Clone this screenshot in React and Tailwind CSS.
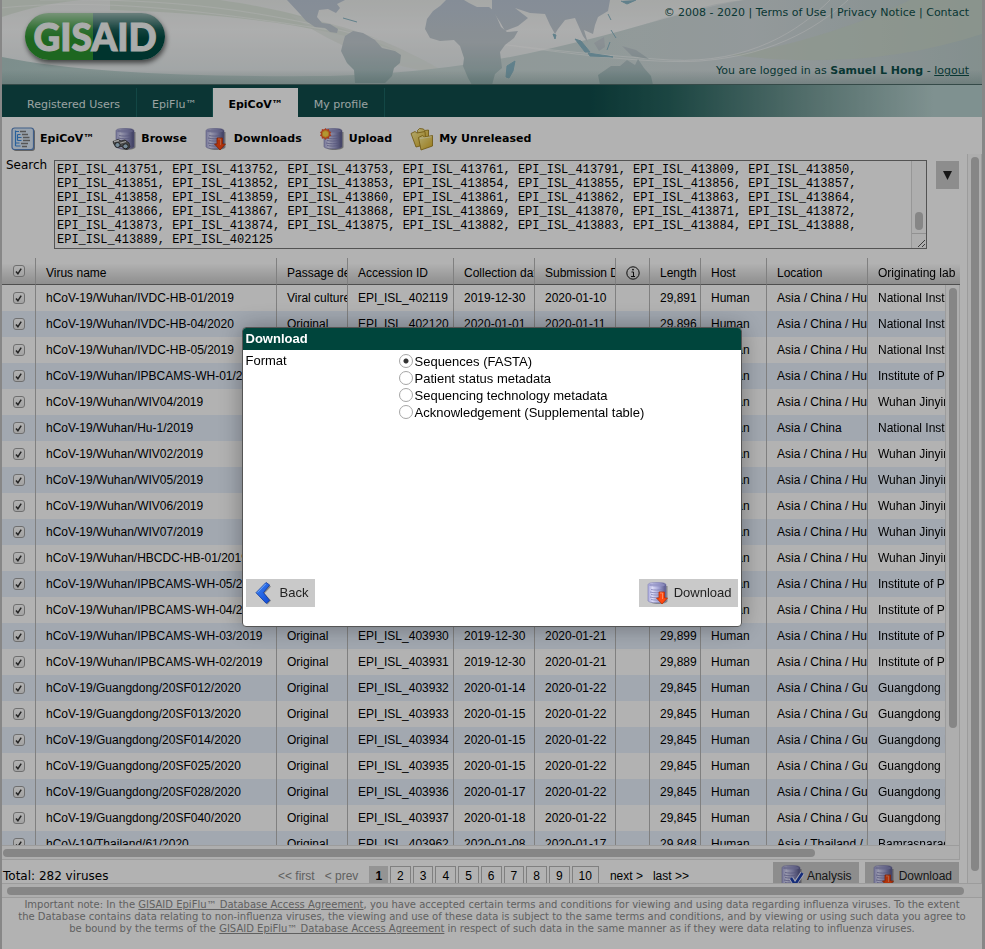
import React, { useEffect, useRef } from "react";

const SANS = "font-['Liberation_Sans',Arial,sans-serif]";

const ids = [
  "413732", "413733", "413734", "413735", "413740", "413742", "413743",
  "413751", "413752", "413753", "413761", "413791", "413809", "413850",
  "413851", "413852", "413853", "413854", "413855", "413856", "413857",
  "413858", "413859", "413860", "413861", "413862", "413863", "413864",
  "413866", "413867", "413868", "413869", "413870", "413871", "413872",
  "413873", "413874", "413875", "413882", "413883", "413884", "413888",
  "413889", "402125",
];
const query = ids.map((id) => "EPI_ISL_" + id).join(", ");

const rows = [
  ["Wuhan/IVDC-HB-01/2019", "Viral culture", "402119", "2019-12-30", "2020-01-10", "29,891", "Asia / China / Hubei", "National Institute for Viral"],
  ["Wuhan/IVDC-HB-04/2020", "Original", "402120", "2020-01-01", "2020-01-11", "29,896", "Asia / China / Hubei", "National Institute for Viral"],
  ["Wuhan/IVDC-HB-05/2019", "Original", "402121", "2019-12-30", "2020-01-11", "29,891", "Asia / China / Hubei", "National Institute for Viral"],
  ["Wuhan/IPBCAMS-WH-01/2019", "Original", "402123", "2019-12-24", "2020-01-11", "29,899", "Asia / China / Hubei", "Institute of Pathogen Biology"],
  ["Wuhan/WIV04/2019", "Original", "402124", "2019-12-30", "2020-01-11", "29,891", "Asia / China / Hubei", "Wuhan Jinyintan Hospital"],
  ["Wuhan/Hu-1/2019", "Original", "402125", "2019-12-31", "2020-01-12", "29,903", "Asia / China", "National Institute for Viral"],
  ["Wuhan/WIV02/2019", "Original", "402127", "2019-12-30", "2020-01-18", "29,825", "Asia / China / Hubei", "Wuhan Jinyintan Hospital"],
  ["Wuhan/WIV05/2019", "Original", "402128", "2019-12-30", "2020-01-18", "29,852", "Asia / China / Hubei", "Wuhan Jinyintan Hospital"],
  ["Wuhan/WIV06/2019", "Original", "402129", "2019-12-30", "2020-01-18", "29,854", "Asia / China / Hubei", "Wuhan Jinyintan Hospital"],
  ["Wuhan/WIV07/2019", "Original", "402130", "2019-12-30", "2020-01-18", "29,857", "Asia / China / Hubei", "Wuhan Jinyintan Hospital"],
  ["Wuhan/HBCDC-HB-01/2019", "Original", "402132", "2019-12-30", "2020-01-19", "29,848", "Asia / China / Hubei", "Wuhan Jinyintan Hospital"],
  ["Wuhan/IPBCAMS-WH-05/2020", "Original", "403928", "2020-01-01", "2020-01-21", "29,883", "Asia / China / Hubei", "Institute of Pathogen Biology"],
  ["Wuhan/IPBCAMS-WH-04/2019", "Original", "403929", "2019-12-30", "2020-01-21", "29,890", "Asia / China / Hubei", "Institute of Pathogen Biology"],
  ["Wuhan/IPBCAMS-WH-03/2019", "Original", "403930", "2019-12-30", "2020-01-21", "29,899", "Asia / China / Hubei", "Institute of Pathogen Biology"],
  ["Wuhan/IPBCAMS-WH-02/2019", "Original", "403931", "2019-12-30", "2020-01-21", "29,889", "Asia / China / Hubei", "Institute of Pathogen Biology"],
  ["Guangdong/20SF012/2020", "Original", "403932", "2020-01-14", "2020-01-22", "29,845", "Asia / China / Guangdong", "Guangdong Provincial Center"],
  ["Guangdong/20SF013/2020", "Original", "403933", "2020-01-15", "2020-01-22", "29,845", "Asia / China / Guangdong", "Guangdong Provincial Center"],
  ["Guangdong/20SF014/2020", "Original", "403934", "2020-01-15", "2020-01-22", "29,845", "Asia / China / Guangdong", "Guangdong Provincial Center"],
  ["Guangdong/20SF025/2020", "Original", "403935", "2020-01-15", "2020-01-22", "29,845", "Asia / China / Guangdong", "Guangdong Provincial Center"],
  ["Guangdong/20SF028/2020", "Original", "403936", "2020-01-17", "2020-01-22", "29,845", "Asia / China / Guangdong", "Guangdong Provincial Center"],
  ["Guangdong/20SF040/2020", "Original", "403937", "2020-01-18", "2020-01-22", "29,845", "Asia / China / Guangdong", "Guangdong Provincial Center"],
  ["Thailand/61/2020", "Original", "403962", "2020-01-08", "2020-01-17", "29,848", "Asia / Thailand / Nonthaburi", "Bamrasnaradura Hospital"],
];

function Defs() {
  return (
    <svg className="absolute h-0 w-0" aria-hidden="true">
      <defs>
        <linearGradient id="cyl" x1="0" x2="1">
          <stop offset="0" stopColor="#a9a9dc" />
          <stop offset=".25" stopColor="#dcdcf8" />
          <stop offset=".6" stopColor="#a2a2d2" />
          <stop offset="1" stopColor="#565688" />
        </linearGradient>
        <linearGradient id="fold" x1="0" y1="0" x2="1" y2="1">
          <stop offset="0" stopColor="#fff3a0" />
          <stop offset="1" stopColor="#dcae22" />
        </linearGradient>
        <linearGradient id="blue" x1="0" y1="0" x2="1" y2="1">
          <stop offset="0" stopColor="#3c83f2" />
          <stop offset="1" stopColor="#0f49d6" />
        </linearGradient>
      </defs>
    </svg>
  );
}

function Cylinder({ x = 3 }) {
  return (
    <g transform={`translate(${x} 0)`}>
      <path d="M2 5v15c0 1.800 3.500 3 8 3s9.500-1.200 9.500-3V5z" fill="#444" opacity=".5" />
      <path d="M0 4c0-1.800 3-2.500 9-2.500S18 2.200 18 4v15.500c0 1.500-4 2.300-9 2.300S0 21 0 19.500z" fill="url(#cyl)" stroke="#7c7cb0" strokeWidth=".6" />
      <path d="M1 4c0-1.200 3-1.800 8-1.800S17 2.800 17 4s-3 1.500-8 1.500S1 5.200 1 4z" fill="#8f8fc2" opacity=".75" />
      <path d="M3 8.500c3 .7 8 .8 11 0M2 11c4 1 9 1 13 0M3 13.500c3 .7 8 .8 11 0M2 16c4 1 9 1 13 0M3 18.500c3 .7 8 .8 11 0" fill="none" stroke="#7f7fb4" strokeWidth=".8" />
    </g>
  );
}

function Icon({ kind }) {
  return (
    <svg className="size-6 shrink-0" viewBox="0 0 24 24" aria-hidden="true">
      {kind === "tree" && (
        <g>
          <rect x="2" y="2" width="22" height="22" rx="3" fill="#444" opacity=".6" />
          <rect x="1" y="1" width="21.500" height="21.500" rx="2.500" fill="#dceaf9" stroke="#5b87c4" strokeWidth="1.200" />
          <path d="M4.500 3.500v7M4.500 4.500h3.500M6.500 7.500h3M6.500 7.500v6M6.500 10.500h4M6.500 13.500h4M4.500 10v9M4.500 16h4M4.500 19h5" fill="none" stroke="#3c8be0" strokeWidth="1.200" />
          <path d="M9 4.500h6M11 7.500h6M12 10.500h6.500M12 13.500h7M10 16.500h7M11 19.500h5" stroke="#7c7c7c" strokeWidth="1.500" />
        </g>
      )}
      {kind === "browse" && (
        <g>
          <Cylinder x={4} />
          <path d="M1 14.500l5-2 3 1.500 4-1 4 3 1 4-3 2.500-3-1-2-2-3 .5-5-2.500z" fill="#6b6b6b" stroke="#333" strokeWidth=".8" />
          <path d="M2 14.500l5-1M7 16.500l7-2" stroke="#e4e4e4" strokeWidth="1.300" />
          <ellipse cx="5.500" cy="18" rx="2.700" ry="2.500" fill="#a9c6da" stroke="#2b2b2b" />
          <ellipse cx="13.500" cy="19.300" rx="2.700" ry="2.500" fill="#a9c6da" stroke="#2b2b2b" />
        </g>
      )}
      {kind === "down" && (
        <g>
          <Cylinder x={1} />
          <path d="M12 11h5.500v6h3L15 23l-5.500-6H12z" fill="#ff4a12" stroke="#b83208" strokeWidth=".8" />
          <path d="M13 12h2.500v6" fill="none" stroke="#ff8a5c" strokeWidth="1" />
        </g>
      )}
      {kind === "upload" && (
        <g>
          <Cylinder x={4} />
          <path d="M5.500 1l1.200 1.500L9 2l.3 2.200 2 .8-1 1.800 1 2-2 .8L9 11.800l-2.300-.5L5.500 13l-1.400-1.700-2.200.5-.3-2.200L0 8.800 1 6.800 0 5l1.600-.8L1.900 2l2.200.5z" fill="#f0562c" />
          <circle cx="5.500" cy="6.900" r="3.300" fill="#ffd94a" stroke="#f8a52a" />
        </g>
      )}
      {kind === "folders" && (
        <g stroke="#9c7a14" strokeWidth=".8">
          <path d="M7.500 3.500l2-2 4 .5 1 1.500 4-.5V15L9 18z" fill="url(#fold)" />
          <path d="M1 6.500l4-2 2 1.500 8-1.500 1 13-10 2.500z" fill="url(#fold)" />
          <path d="M8.500 10.500l4-2 2 1.500 8-1.500V19l-11.500 4z" fill="url(#fold)" />
          <path d="M10 11.500l11.500-1.800" stroke="#fffbd0" />
        </g>
      )}
      {kind === "check" && (
        <g>
          <Cylinder x={1} />
          <path d="M10 14l4 6 7.500-11" fill="none" stroke="#eef" strokeWidth="4.500" />
          <path d="M10 14l4 6.500 7.500-11.500" fill="none" stroke="#1d3fae" strokeWidth="2.600" />
        </g>
      )}
      {kind === "back" && (
        <g>
          <path d="M15 3l4 2.500-6.500 7 6.500 7-3.500 4L6 13z" fill="#444" opacity=".5" />
          <path d="M14 1.500l3.700 2.500-6.200 7.700 6.200 7.700-3.500 3L4 11.700z" fill="url(#blue)" stroke="#123a9c" strokeWidth=".8" />
          <path d="M13.800 2.800L5.300 11.500" stroke="#7db4ff" strokeWidth=".9" />
        </g>
      )}
    </svg>
  );
}

function HeaderArt() {
  return (
    <svg className="absolute inset-0 h-full w-full" viewBox="2 0 980 85" preserveAspectRatio="xMidYMid slice" aria-hidden="true">
      <defs>
        <linearGradient id="sky" x1="0" y1="0" x2="0" y2="1">
          <stop offset="0" stopColor="#eef1ef" />
          <stop offset=".35" stopColor="#f8f9f9" />
          <stop offset="1" stopColor="#e2e9ea" />
        </linearGradient>
        <linearGradient id="wave" x1="0" x2="1">
          <stop offset="0" stopColor="#b3ccc9" />
          <stop offset=".3" stopColor="#cadad8" />
          <stop offset=".65" stopColor="#d0dddc" />
          <stop offset="1" stopColor="#c3d3d1" />
        </linearGradient>
        <linearGradient id="land" gradientUnits="userSpaceOnUse" x1="0" y1="0" x2="0" y2="85">
          <stop offset="0" stopColor="#bfcbd9" />
          <stop offset=".5" stopColor="#c6ced4" />
          <stop offset="1" stopColor="#a0bcbb" />
        </linearGradient>
        <linearGradient id="base" x1="0" y1="0" x2="0" y2="1">
          <stop offset="0" stopColor="#6f8f8c" stopOpacity="0" />
          <stop offset="1" stopColor="#6f8f8c" stopOpacity=".6" />
        </linearGradient>
        <linearGradient id="shade" x1="0" x2="1">
          <stop offset="0" stopColor="#d5dcdf" stopOpacity="0" />
          <stop offset=".4" stopColor="#d5dcdf" stopOpacity=".8" />
          <stop offset="1" stopColor="#bccdcb" stopOpacity=".9" />
        </linearGradient>
      </defs>
      <rect x="2" width="980" height="85" fill="url(#sky)" />
      <path d="M2 0h80C50 3 30 8 2 17zM110 0h110c70 10 120 25 180 52C320 24 230 14 110 10z" fill="#e0e9df" />
      <path d="M290 15c60 10 110 30 160 60-60-8-110-25-160-60z" fill="#e4e9e4" opacity=".7" />
      <path d="M2 57C80 73 200 77 330 76 470 72 560 48 660 20 700 9 720 4 745 0H982V85H2z" fill="url(#wave)" />
      <path d="M600 40C680 10 720 2 745 0H982V85H600z" fill="url(#shade)" />
      <path d="M730 55C810 44 880 15 910 0h72v34c-80 26-160 32-252 21z" fill="#cbd9c8" opacity=".6" />
      <path d="M0 8C100-2 200 10 330 30M430 34c60 10 150 20 240 26 80 4 130-30 160-60M500 44c70 10 150 20 200 17 80-6 125-40 148-61M40 0C180-2 260 10 380 40" fill="none" stroke="#fff" strokeWidth=".8" opacity=".6" />
      <g fill="url(#land)">
        <path d="M287 0l13 14 6 7 9 6 10 1 5 4 7 1 1-4-8-5-8-1-5-6 2-7 9-1 8 4 4-5-3-4 8-4zM345 36l8-5 10 2 12 7 7 8 13 3 6 4-1 8-6 5-2 8-7 7h-30l-1-13-7-7-6-12 2-8z" />
        <path d="M446 0l-6 6-7 5-6 8-2 10 5 9 10 3 14-1 6 6 4 12-1 8 5 12 4 7h20l3-11 7-6-2-16 5-7 9-7 4-7-11 1-6-5-7-16-5-4-12 0-8-4-5-3z" />
        <path d="M492 0h118l-2 11-10 6-3 8-2 9-9-4 4 13-5-7-4-9-4-9-10 2-7 9-3 5-5-9-5-11-15-1-15-5 13 10-10 8-13 5-5-9-8-12z" />
        <path d="M594 43l10-6 1 10-6 4zM622 46l14 4 13 9-17-3zM600 85l-2-10 13-9 9 0 7-6 8 5 3-6 6 9 7 8 2 9z" />
      </g>
      <path d="M515 61l-8 5-1 11 3 1 4-7zM575 39l6 2 9 11-5 0zM588 53l20 3 5 1-23-1zM610 42l-3 8M553 34l3 1-1 4zM608 14l3 6M611 30l5 8M343 18l14 4M621 1l6 3 9-4" fill="#8bb8c7" stroke="#8bb8c7" strokeWidth="1" />
      <rect x="2" y="70" width="980" height="15" fill="url(#base)" opacity=".7" />
      <rect x="2" y="84" width="980" height="1" fill="#4d6a67" />
    </svg>
  );
}

function Check({ label }) {
  return (
    <span className="grid size-[13px] place-items-center">
      <input type="checkbox" defaultChecked aria-label={label} className="col-start-1 row-start-1 size-3 appearance-none rounded-[3px] border border-[#a0a0a0] bg-linear-to-b from-white to-[#eaeaea]" />
      <svg className="pointer-events-none col-start-1 row-start-1 size-[11px]" viewBox="0 0 11 11" aria-hidden="true">
        <path d="M3 5.600l1.900 2.200L8.200 2.600" fill="none" stroke="#333" strokeWidth="1.500" />
      </svg>
    </span>
  );
}

const widths = ["w-[34px]", "w-[241px]", "w-[71px]", "w-[106px]", "w-[81px]", "w-[81px]", "w-[34px]", "w-[51px]", "w-[66px]", "w-[101px]", "w-auto"];
const heads = ["Virus name", "Passage details", "Accession ID", "Collection date", "Submission Date", "info", "Length", "Host", "Location", "Originating lab"];
const cell = "overflow-hidden whitespace-nowrap border-r border-[#b8b8b8] p-0 pl-[10px] text-left font-normal text-clip last:border-r-0";

function VirusTable() {
  return (
    <table className={`w-full table-fixed border-separate border-spacing-0 text-[12px] leading-[14px] text-black ${SANS}`}>
      <colgroup>{widths.map((w, i) => <col key={i} className={w} />)}</colgroup>
      <thead>
        <tr className="h-[27px] bg-linear-to-b from-white from-20% to-[#cacaca]">
          <th className="border-r border-b border-r-[#b8b8b8] border-b-[#707070] p-0 pl-[10px]"><Check label="Select all" /></th>
          {heads.map((h) => (
            <th key={h} className={`${cell} border-b border-b-[#707070] pt-1`}>
              {h === "info" ? (
                <svg className="size-[14px]" viewBox="0 0 14 14" role="img" aria-label="Info">
                  <circle cx="7" cy="7" r="6.200" fill="none" stroke="#111" strokeWidth="1" />
                  <path d="M5.500 6h2v4.500M5 10.500h4" fill="none" stroke="#111" strokeWidth="1" />
                  <circle cx="7" cy="3.600" r=".9" fill="#111" />
                </svg>
              ) : h}
            </th>
          ))}
        </tr>
      </thead>
      <tbody>
        {rows.map(([name, passage, id, collected, submitted, length, place, lab]) => (
          <tr key={id} className="h-[26px] even:bg-[#e8f1fd]">
            <td className="border-r border-[#b8b8b8] p-0 pl-[10px]"><Check label={"Select " + name} /></td>
            {["hCoV-19/" + name, passage, "EPI_ISL_" + id, collected, submitted, "", length, "Human", place, lab].map((v, i) => (
              <td key={i} className={cell}>{v}</td>
            ))}
          </tr>
        ))}
      </tbody>
    </table>
  );
}

function SearchBox() {
  const ref = useRef(null);
  useEffect(() => {
    ref.current.scrollTop = ref.current.scrollHeight;
  }, []);
  return (
    <div className="relative h-[89px] min-w-0 flex-1">
      <textarea id="search" ref={ref} defaultValue={query} spellCheck={false} className="block h-full w-full resize-none border border-[#777] bg-white pt-[2px] pr-[18px] pb-px pl-[2px] font-['Liberation_Mono','Courier_New',monospace] text-[12px] leading-[14px] text-black [scrollbar-width:none]" />
      <div className="absolute top-px right-px bottom-px flex w-[15px] flex-col border-l border-[#d8d8d8] bg-[#fafafa]">
        <div className="flex flex-1 items-end justify-center pb-[3px]"><div className="h-[18px] w-2 rounded-full bg-[#c0c0c0]" /></div>
        <svg className="h-[15px] w-full border-t border-[#d0d0d0]" viewBox="0 0 14 14" aria-hidden="true"><path d="M6 13l7-7M10 13l3-3" stroke="#555" /></svg>
      </div>
    </div>
  );
}

const pageBtn = "h-5 border border-[#b8b8b8] px-[6px]";

export default function App() {
  return (
    <div className="h-screen overflow-hidden bg-[#c2c2c2] pr-[3px] pl-[2px] font-['DejaVu_Sans',Verdana,sans-serif] text-black">
      <Defs />
      <div className="flex h-full flex-col bg-white">
        <header className="relative flex h-[85px] shrink-0 justify-between overflow-hidden text-[11px] leading-[14px] text-[#0e4f4a]">
          <HeaderArt />
          <div className="relative mt-[13px] ml-[23px] flex h-[47px] w-[140px] items-center justify-center rounded-full bg-[linear-gradient(180deg,rgba(255,255,255,.6)_0%,rgba(255,255,255,.12)_35%,transparent_55%),linear-gradient(90deg,#2c942f_68px,#004b42_68px)] font-['Lato',sans-serif] text-[37px] leading-none font-black text-[#f4f6f5] shadow-[1px_3px_5px_rgba(0,0,0,.6)] [-webkit-text-stroke:1px_#f4f6f5]">GISAID</div>
          <div className="relative flex flex-col items-end justify-between pt-[6px] pr-[13px] pb-[7px]">
            <p>© 2008 - 2020 | <a href="#terms">Terms of Use</a> | <a href="#privacy">Privacy Notice</a> | <a href="#contact">Contact</a></p>
            <p>You are logged in as <b>Samuel L Hong</b> - <a href="#logout" className="underline">logout</a></p>
          </div>
        </header>
        <nav className="flex h-8 shrink-0 items-stretch bg-[linear-gradient(90deg,#104d4b_60%,#28645f_68%,#7ba19d_83%,#b6d0ce_95%)] pt-[3px] pl-[9px] text-[11px] leading-[14px] text-[#dfe8e7]">
          <a href="#users" className="border-r border-[#1c6663] px-4 pt-[10px]">Registered Users</a>
          <a href="#flu" className="border-r border-[#1c6663] px-4 pt-[10px] pl-[15px]">EpiFlu™</a>
          <a href="#cov" aria-current="page" className="bg-white px-[15px] pt-[10px] font-bold text-black">EpiCoV™</a>
          <a href="#me" className="border-r border-[#1c6663] px-4 pt-[10px]">My profile</a>
        </nav>
        <div className="flex h-[37px] shrink-0 items-center gap-[18px] pt-[6px] pl-[9px] text-[11px] leading-[14px] font-bold">
          {[["tree", "EpiCoV™"], ["browse", "Browse"], ["down", "Downloads"], ["upload", "Upload"], ["folders", "My Unreleased"]].map(([k, t]) => (
            <button key={k} className="flex items-center gap-[5px]"><Icon kind={k} />{t}</button>
          ))}
        </div>

        <main className="flex min-h-0 flex-1 flex-col">
          <div className="flex min-h-0 flex-1">
            <div className="flex min-w-0 flex-1 flex-col">
              <div className="flex h-[104px] shrink-0 items-start pt-[6px] pr-2 pl-1">
                <label htmlFor="search" className="w-12 shrink-0 text-[12px] leading-[10px]">Search</label>
                <SearchBox />
                <button aria-label="Expand search" className="mt-px ml-[9px] h-7 w-[23px] bg-[#cbcbcb]">
                  <svg className="mx-auto h-[9px] w-[9px]" viewBox="0 0 9 9" aria-hidden="true"><path d="M0 0h9L4.500 9z" fill="#222" /></svg>
                </button>
              </div>
              <div className="relative mr-[7px] min-h-0 flex-1 overflow-hidden">
                <VirusTable />
                <div className="absolute top-[27px] right-0 bottom-0 w-[15px] border-x border-[#e0e0e0] bg-[#fafafa] px-[3px] pt-[3px]">
                  <div className="h-[79%] w-2 rounded-full bg-[#c0c0c0]" />
                </div>
              </div>
              <div className="mr-[7px] flex h-[15px] shrink-0 items-center border-y border-r border-[#e0e0e0] bg-[#fafafa] px-px">
                <div className="h-2 w-[85%] rounded-full bg-[#c0c0c0]" />
              </div>
              <div className={`flex h-[23px] shrink-0 items-start justify-between overflow-hidden pr-2 pl-px text-[12px] leading-[18px] ${SANS}`}>
                <p className="w-[275px] pt-[7px] font-['DejaVu_Sans',Verdana,sans-serif]">Total: 282 viruses</p>
                <div className="flex flex-1 items-start gap-[2px] pt-[6px]">
                  <button className="mr-[8px] h-5 text-[#8a8a8a]">&lt;&lt; first</button>
                  <button className="mr-[9px] h-5 text-[#8a8a8a]">&lt; prev</button>
                  <button aria-current="page" className="h-5 bg-[#d4d4d4] px-[6px] font-bold">1</button>
                  {[2, 3, 4, 5, 6, 7, 8, 9, 10].map((n) => <button key={n} className={pageBtn}>{n}</button>)}
                  <button className="ml-[9px] h-5">next &gt;</button>
                  <button className="ml-[8px] h-5">last &gt;&gt;</button>
                </div>
                <div className="flex gap-[6px] pt-[2px] text-[#222]">
                  <button className="flex h-7 items-center gap-[2px] bg-[#cbcbcb] pr-[7px] pl-[8px]"><Icon kind="check" />Analysis</button>
                  <button className="flex h-7 items-center gap-[2px] bg-[#cbcbcb] pr-[7px] pl-[8px]"><Icon kind="down" />Download</button>
                </div>
              </div>
            </div>
            <div className="w-[15px] shrink-0 border-x border-[#e0e0e0] bg-[#fafafa] px-[3px] pt-[3px] pb-3">
              <div className="h-full w-2 rounded-full bg-[#c0c0c0]" />
            </div>
          </div>
          <div className="flex h-[15px] shrink-0 items-center border-y border-[#e0e0e0] bg-[#fafafa] pr-[18px] pl-[5px]">
            <div className="h-2 w-full rounded-full bg-[#c0c0c0]" />
          </div>
        </main>
        <footer className="h-[51px] shrink-0 pt-px text-center text-[10px] leading-3 whitespace-nowrap text-[#8a8a8a]">
          Important note: In the <a href="#agreement" className="underline">GISAID EpiFlu™ Database Access Agreement</a>, you have accepted certain terms and conditions for viewing and using data regarding influenza viruses. To the extent<br />
          the Database contains data relating to non-influenza viruses, the viewing and use of these data is subject to the same terms and conditions, and by viewing or using such data you agree to<br />
          be bound by the terms of the <a href="#agreement" className="underline">GISAID EpiFlu™ Database Access Agreement</a> in respect of such data in the same manner as if they were data relating to influenza viruses.
        </footer>
      </div>

      <div className="fixed inset-0 flex items-center justify-center bg-black/30 pt-1 pr-[2px]">
        <section role="dialog" aria-label="Download" className={`flex h-[300px] w-[500px] flex-col overflow-hidden rounded-[4px] border border-[#555] bg-white text-[13px] leading-[17px] shadow-[0_0_24px_rgba(0,0,0,.35)] ${SANS}`}>
          <h2 className="h-[22px] shrink-0 bg-[#00453c] px-[3px] pt-[2px] font-bold text-white">Download</h2>
          <fieldset className="flex flex-1 px-[3px] pt-[2px]">
            <div className="w-[153px]">Format</div>
            <div className="pt-px">
              {["Sequences (FASTA)", "Patient status metadata", "Sequencing technology metadata", "Acknowledgement (Supplemental table)"].map((t, i) => (
                <label key={t} className="flex h-[17px] items-center gap-[2px]">
                  <input type="radio" name="format" defaultChecked={i === 0} className="size-[14px] appearance-none rounded-full border border-[#a6a6a6] bg-white checked:bg-[radial-gradient(circle,#333_2px,transparent_3px)]" />
                  {t}
                </label>
              ))}
            </div>
          </fieldset>
          <div className="flex justify-between px-[3px] pb-[19px] text-[#222]">
            <button className="flex h-7 items-center gap-[4px] bg-[#c9c9c9] pr-[7px] pl-[6px]"><Icon kind="back" />Back</button>
            <button className="flex h-7 items-center gap-[3px] bg-[#c9c9c9] pr-[6px] pl-[8px]"><Icon kind="down" />Download</button>
          </div>
        </section>
      </div>
    </div>
  );
}
